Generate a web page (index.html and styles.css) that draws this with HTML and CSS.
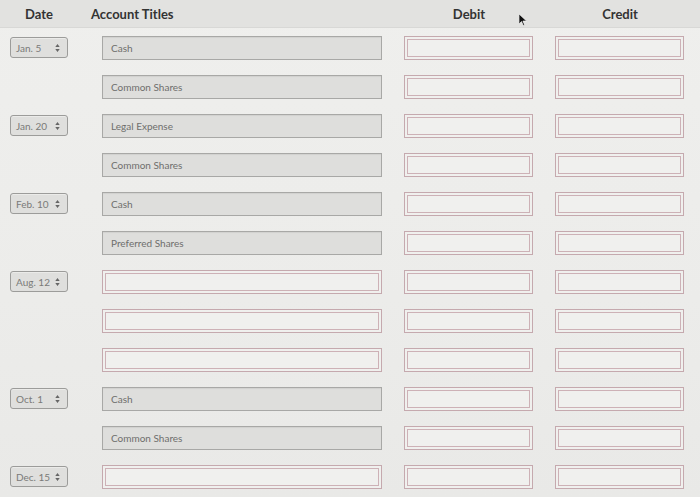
FILE: index.html
```html
<!DOCTYPE html>
<html>
<head>
<meta charset="utf-8">
<link rel="stylesheet" href="styles.css">
</head>
<body>
<div class="sheet">
  <div class="row head">
    <div class="h h-date">Date</div>
    <div class="h h-acct">Account Titles</div>
    <div class="h h-num">Debit</div>
    <div class="h h-num">Credit</div>
  </div>

  <div class="row"><div class="sel">Jan. 5<svg class="arr" viewBox="0 0 5 9"><path d="M2.5 0L5 3.5H0z M2.5 9L5 5.5H0z"/></svg></div><div class="acct filled">Cash</div><div class="num"></div><div class="num"></div></div>
  <div class="row"><div></div><div class="acct filled">Common Shares</div><div class="num"></div><div class="num"></div></div>
  <div class="row"><div class="sel">Jan. 20<svg class="arr" viewBox="0 0 5 9"><path d="M2.5 0L5 3.5H0z M2.5 9L5 5.5H0z"/></svg></div><div class="acct filled">Legal Expense</div><div class="num"></div><div class="num"></div></div>
  <div class="row"><div></div><div class="acct filled">Common Shares</div><div class="num"></div><div class="num"></div></div>
  <div class="row"><div class="sel">Feb. 10<svg class="arr" viewBox="0 0 5 9"><path d="M2.5 0L5 3.5H0z M2.5 9L5 5.5H0z"/></svg></div><div class="acct filled">Cash</div><div class="num"></div><div class="num"></div></div>
  <div class="row"><div></div><div class="acct filled">Preferred Shares</div><div class="num"></div><div class="num"></div></div>
  <div class="row"><div class="sel">Aug. 12<svg class="arr" viewBox="0 0 5 9"><path d="M2.5 0L5 3.5H0z M2.5 9L5 5.5H0z"/></svg></div><div class="acct empty"></div><div class="num"></div><div class="num"></div></div>
  <div class="row"><div></div><div class="acct empty"></div><div class="num"></div><div class="num"></div></div>
  <div class="row"><div></div><div class="acct empty"></div><div class="num"></div><div class="num"></div></div>
  <div class="row"><div class="sel">Oct. 1<svg class="arr" viewBox="0 0 5 9"><path d="M2.5 0L5 3.5H0z M2.5 9L5 5.5H0z"/></svg></div><div class="acct filled">Cash</div><div class="num"></div><div class="num"></div></div>
  <div class="row"><div></div><div class="acct filled">Common Shares</div><div class="num"></div><div class="num"></div></div>
  <div class="row"><div class="sel">Dec. 15<svg class="arr" viewBox="0 0 5 9"><path d="M2.5 0L5 3.5H0z M2.5 9L5 5.5H0z"/></svg></div><div class="acct empty"></div><div class="num"></div><div class="num"></div></div>

  <svg class="cursor" viewBox="0 0 8 12"><path d="M0 0V10L2.5 7.5L4.3 11.5L5.6 10.9L3.9 7H7.5Z" fill="#111" stroke="#fff" stroke-width="0.6"/></svg>
</div>
</body>
</html>
```

FILE: styles.css
```css
html, body {
  margin: 0;
  padding: 0;
  background: #eeeeec;
}
body {
  font-family: Lato, "Open Sans", "Liberation Sans", sans-serif;
  width: 700px;
  height: 497px;
  overflow: hidden;
}
.sheet {
  position: relative;
  background: linear-gradient(180deg, #efefed 0%, #ececea 60%, #e9e9e7 100%);
  height: 497px;
}
.row {
  display: grid;
  grid-template-columns: 92px 302px 151px 130px;
  align-items: center;
  height: 39px;
  padding-left: 10px;
}
.row.head {
  height: 28px;
  background: #e2e2e0;
  border-bottom: 1px solid #d8d8d6;
  box-sizing: border-box;
}
.h {
  font-weight: 700;
  font-size: 13px;
  color: #333;
}
.h-date {
  width: 58px;
  text-align: center;
}
.h-acct {
  padding-left: 0;
  margin-left: -11px;
}
.h-num {
  width: 130px;
  text-align: center;
}
.sel {
  width: 58px;
  height: 21px;
  box-sizing: border-box;
  border: 1px solid #9c9c9a;
  border-radius: 3px;
  background: #dfdfdd;
  box-shadow: inset 0 1px 0 #ebebe9;
  font-size: 10px;
  color: #7a7a78;
  display: flex;
  align-items: center;
  justify-content: space-between;
  padding: 0 7px 0 5px;
}
.arr {
  width: 5px;
  height: 8px;
  fill: #666;
}
.acct {
  width: 280px;
  height: 24px;
  box-sizing: border-box;
  font-size: 10px;
  color: #6e6e6c;
  display: flex;
  align-items: center;
  padding-left: 8px;
}
.filled {
  background: #dededc;
  border: 1px solid #a8a8a6;
  box-shadow: inset 0 1px 1px rgba(0,0,0,0.06);
}
.empty, .num {
  height: 24px;
  box-sizing: border-box;
  border: 1px solid #c5a9ae;
  background: #f0f0ee;
  box-shadow: inset 0 0 0 2px #f0f0ee, inset 0 0 0 3px #cdb1b6;
}
.num {
  width: 129px;
}
.cursor {
  position: absolute;
  left: 519px;
  top: 14px;
  width: 8px;
  height: 12px;
}
```
